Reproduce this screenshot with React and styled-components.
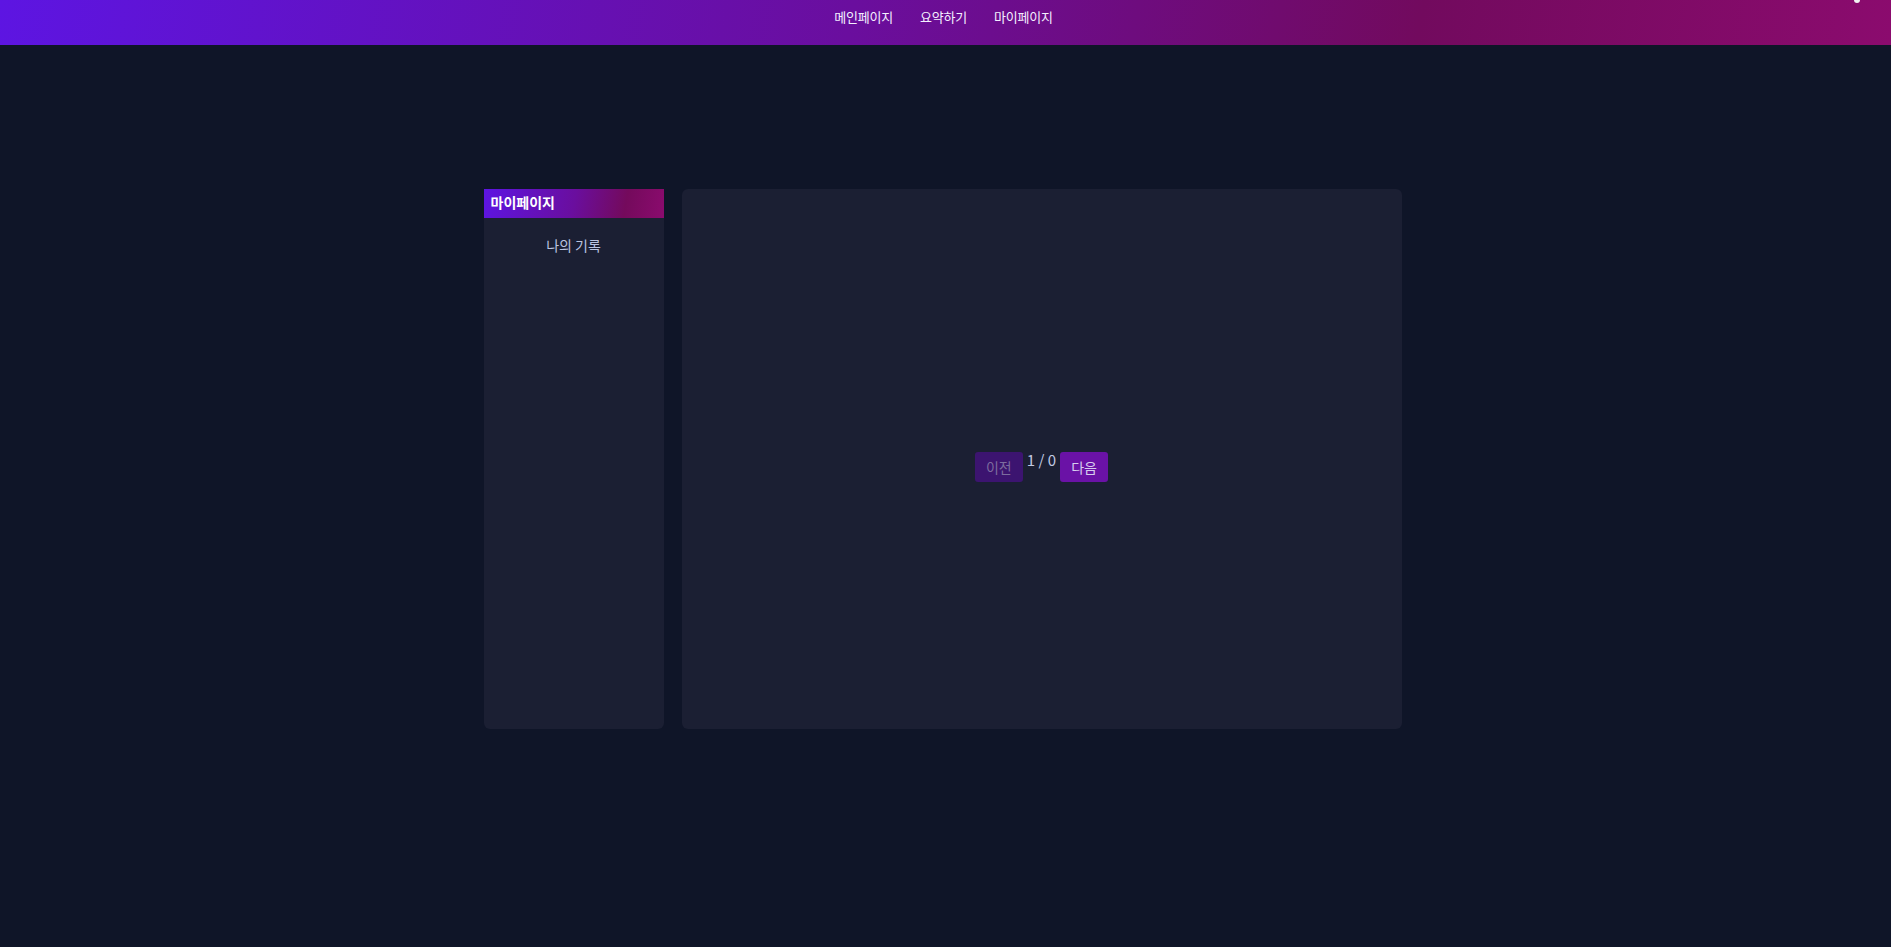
import React, { useState } from "react";
import styled, { createGlobalStyle } from "styled-components";

const GlobalStyle = createGlobalStyle`
    html, body {
        margin: 0;
        padding: 0;
        background: #0f1528;
        font-family: "Noto Sans CJK KR", "Noto Sans", sans-serif;
    }
`;

const Page = styled.div`
    min-height: 947px;
    background: #0f1528;
`;

const Header = styled.header`
    position: relative;
    height: 45px;
    background: linear-gradient(100deg, #5d15e2 0%, #6a0e9e 45%, #720a5e 75%, #8b0b6e 100%);
    display: flex;
    justify-content: center;
    align-items: flex-start;
`;

const Nav = styled.nav`
    display: flex;
    gap: 27px;
    padding-top: 7px;
    padding-right: 4px;
`;

const NavLink = styled.a`
    color: #f4f0ff;
    font-size: 13px;
    line-height: 20px;
    letter-spacing: -0.2px;
    text-decoration: none;
    cursor: pointer;
`;

const Dot = styled.span`
    position: absolute;
    right: 31px;
    top: -3px;
    width: 6px;
    height: 6px;
    border-radius: 50%;
    background: #f2f2f2;
`;

const Layout = styled.div`
    display: flex;
    justify-content: center;
    gap: 18px;
    padding-top: 144px;
    padding-right: 6px;
`;

const Sidebar = styled.aside`
    width: 180px;
    height: 540px;
    background: #1b1f33;
    border-radius: 0 0 6px 6px;
    display: flex;
    flex-direction: column;
`;

const SidebarTitle = styled.div`
    height: 29px;
    padding: 0 0 4px 7px;
    box-sizing: border-box;
    display: flex;
    align-items: center;
    color: #ffffff;
    font-size: 14px;
    font-weight: 700;
    background: linear-gradient(100deg, #5d15e2 0%, #6a0e9e 50%, #740a5c 78%, #8b0b6e 100%);
`;

const SidebarItem = styled.div`
    margin-top: 17px;
    text-align: center;
    color: #b9c3e0;
    font-size: 14px;
    cursor: pointer;
`;

const Main = styled.main`
    width: 720px;
    height: 540px;
    background: #1b1f33;
    border-radius: 6px;
    display: flex;
    align-items: center;
    justify-content: center;
`;

const Pager = styled.div`
    display: flex;
    align-items: flex-start;
    gap: 4px;
    margin-top: 15px;
`;

const PageButton = styled.button`
    width: 48px;
    height: 30px;
    border: none;
    border-radius: 3px;
    font-family: inherit;
    font-size: 14px;
    background: ${props => (props.disabled ? "#3c1470" : "#6a12a6")};
    color: ${props => (props.disabled ? "#7c6c9e" : "#d6cdef")};
    cursor: ${props => (props.disabled ? "default" : "pointer")};
`;

const PageInfo = styled.span`
    color: #c2cae4;
    font-size: 15px;
    line-height: 16px;
`;

const App = () => {
    const [page, setPage] = useState(1);
    const total = 0;

    return (
        <Page>
            <GlobalStyle />
            <Header>
                <Nav>
                    <NavLink>메인페이지</NavLink>
                    <NavLink>요약하기</NavLink>
                    <NavLink>마이페이지</NavLink>
                </Nav>
                <Dot />
            </Header>
            <Layout>
                <Sidebar>
                    <SidebarTitle>마이페이지</SidebarTitle>
                    <SidebarItem>나의 기록</SidebarItem>
                </Sidebar>
                <Main>
                    <Pager>
                        <PageButton disabled={page <= 1} onClick={() => setPage(page - 1)}>
                            이전
                        </PageButton>
                        <PageInfo>
                            {page} / {total}
                        </PageInfo>
                        <PageButton onClick={() => setPage(page + 1)}>다음</PageButton>
                    </Pager>
                </Main>
            </Layout>
        </Page>
    );
};

export default App;
